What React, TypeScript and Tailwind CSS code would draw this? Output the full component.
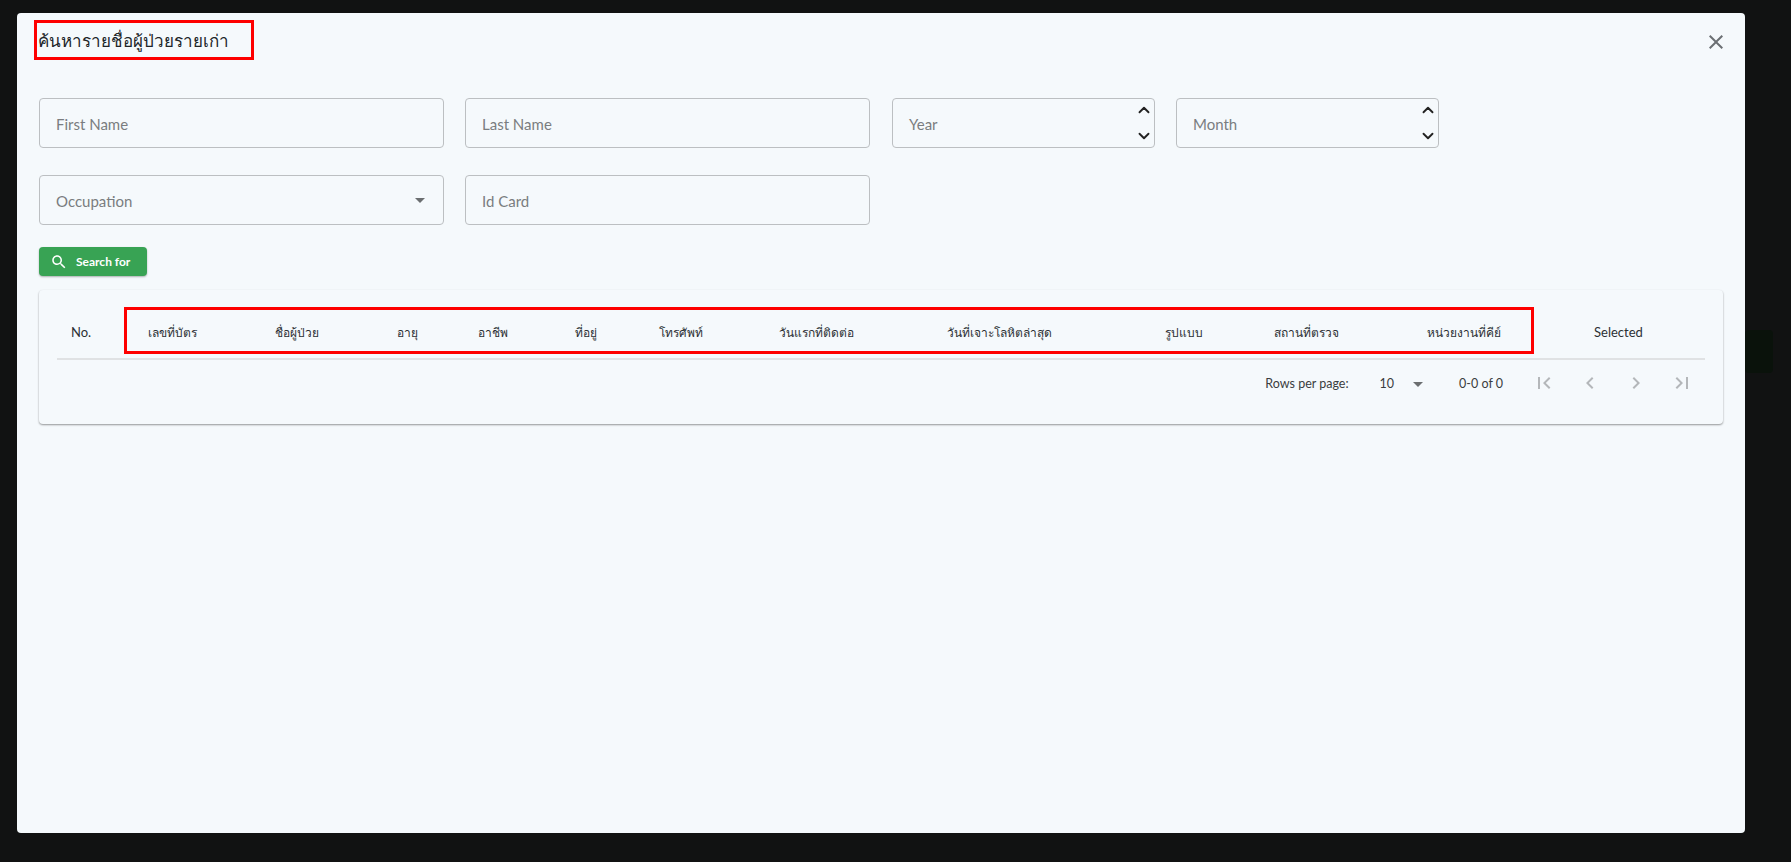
import { ChevronDown, ChevronUp } from "lucide-react";

const columns = [
  { label: "No.", width: "w-[67px]", pad: "pl-[14px] text-[13px]" },
  { label: "เลขที่บัตร", width: "w-[127px]", pad: "pl-[24px]" },
  { label: "ชื่อผู้ป่วย", width: "w-[122px]", pad: "pl-[24px]" },
  { label: "อายุ", width: "w-[81px]", pad: "pl-[24px]" },
  { label: "อาชีพ", width: "w-[97px]", pad: "pl-[24px]" },
  { label: "ที่อยู่", width: "w-[84px]", pad: "pl-[24px]" },
  { label: "โทรศัพท์", width: "w-[120px]", pad: "pl-[24px]" },
  { label: "วันแรกที่ติดต่อ", width: "w-[168px]", pad: "pl-[24px]" },
  { label: "วันที่เจาะโลหิตล่าสุด", width: "w-[218px]", pad: "pl-[24px]" },
  { label: "รูปแบบ", width: "w-[109px]", pad: "pl-[24px]" },
  { label: "สถานที่ตรวจ", width: "w-[153px]", pad: "pl-[24px]" },
  { label: "หน่วยงานที่คีย์", width: "w-[167px]", pad: "pl-[24px]" },
  { label: "Selected", width: "w-[135px]", pad: "pl-[24px] text-[13px]" },
];

// material icon paths, the reference uses these
const pagerIcons = [
  "M18.41 16.59L13.82 12l4.59-4.59L17 6l-6 6 6 6zM6 6h2v12H6z",
  "M15.41 16.59L10.83 12l4.58-4.59L14 6l-6 6 6 6 1.41-1.41z",
  "M8.59 16.59L13.17 12 8.59 7.41 10 6l6 6-6 6-1.41-1.41z",
  "M5.59 7.41L10.18 12l-4.59 4.59L7 18l6-6-6-6zM16 6h2v12h-2z",
];

function MuiIcon({ d, size, className }: { d: string; size: number; className?: string }) {
  return (
    <svg width={size} height={size} viewBox="0 0 24 24" fill="currentColor" className={className}>
      <path d={d} />
    </svg>
  );
}

function TextField({ label, className }: { label: string; className: string }) {
  return (
    <div className={`h-[50px] flex items-center rounded border border-[#bcbfc2] pl-4 pt-[2px] text-[15px] text-[#7a7d80] ${className}`}>
      {label}
    </div>
  );
}

function NumberField({ label }: { label: string }) {
  return (
    <div className="w-[263px] h-[50px] flex items-center justify-between rounded border border-[#bcbfc2] pl-4 pr-[1px] text-[15px] text-[#7a7d80]">
      <span className="pt-[2px]">{label}</span>
      <div className="flex flex-col justify-between h-[44px] text-[#222]">
        <ChevronUp size={18} strokeWidth={2.5} />
        <ChevronDown size={18} strokeWidth={2.5} />
      </div>
    </div>
  );
}

export default function App() {
  return (
    <div className="relative w-[1791px] h-[862px] overflow-hidden bg-[#111212] pt-[13px] pl-[17px] font-['Lato','Noto_Sans',sans-serif]">
      {/* button of the page behind the backdrop */}
      <div className="absolute left-[1745px] top-[330px] w-[28px] h-[43px] rounded-sm bg-[#0a120b]" />

      <div className="relative w-[1728px] h-[820px] rounded bg-[#f5f9fc] px-[22px]">
        {/* annotation boxes */}
        <div className="absolute left-[17px] top-[7px] w-[220px] h-[40px] border-[3px] border-[#fe0000]" />
        <div className="absolute left-[107px] top-[294px] w-[1410px] h-[47px] border-[3px] border-[#fe0000]" />

        <div className="h-[85px] flex items-start justify-between">
          <h2 className="mt-[13px] -ml-[1px] text-[17px] leading-[30px] text-[#212529]">ค้นหารายชื่อผู้ป่วยรายเก่า</h2>
          <MuiIcon
            size={24}
            d="M19 6.41L17.59 5 12 10.59 6.41 5 5 6.41 10.59 12 5 17.59 6.41 19 12 13.41 17.59 19 19 17.59 13.41 12z"
            className="mt-[17px] -mr-[5px] text-[#6b6f73]"
          />
        </div>

        <div className="flex gap-[21px]">
          <TextField label="First Name" className="w-[405px]" />
          <TextField label="Last Name" className="w-[405px] mr-[1px]" />
          <NumberField label="Year" />
          <NumberField label="Month" />
        </div>

        <div className="flex gap-[21px] mt-[27px]">
          <div className="w-[405px] h-[50px] flex items-center justify-between rounded border border-[#bcbfc2] pl-4 pr-[18px] text-[15px] text-[#7a7d80]">
            <span className="pt-[2px]">Occupation</span>
            <div className="w-0 h-0 border-x-[5px] border-x-transparent border-t-[5px] border-t-[#6b6e70]" />
          </div>
          <TextField label="Id Card" className="w-[405px]" />
        </div>

        <button className="mt-[22px] w-[108px] h-[29px] flex items-center gap-[8px] pl-[11px] rounded bg-[#38a354] text-white text-[12px] font-bold shadow-[0_1px_2px_rgba(0,0,0,0.3)]">
          <MuiIcon
            size={18}
            d="M15.5 14h-.79l-.28-.27C15.41 12.59 16 11.11 16 9.5 16 5.91 13.09 3 9.5 3S3 5.91 3 9.5 5.91 16 9.5 16c1.61 0 3.09-.59 4.23-1.57l.27.28v.79l5 4.99L20.49 19l-4.99-5zm-6 0C7.01 14 5 11.99 5 9.5S7.01 5 9.5 5 14 7.01 14 9.5 11.99 14 9.5 14z"
          />
          <span className="pt-[1px]">Search for</span>
        </button>

        <div className="mt-[14px] w-[1684px] h-[134px] rounded bg-[#f5f9fc] px-[18px] shadow-[0_1px_2px_rgba(0,0,0,0.4)]">
          <div className="flex h-[70px] items-center border-b-2 border-[#e0e2e4] text-[12px] text-[#2c3034] pt-[17px]">
            {columns.map((col) => (
              <div key={col.label} className={`${col.width} ${col.pad} shrink-0`}>
                {col.label}
              </div>
            ))}
          </div>
          <div className="flex items-center justify-end h-[49px] pr-[11px] text-[12.5px] text-[#3a3d40]">
            <span>Rows per page:</span>
            <span className="ml-[31px]">10</span>
            <div className="ml-[19px] w-0 h-0 border-x-[5px] border-x-transparent border-t-[5px] border-t-[#6b6e70]" />
            <span className="ml-[36px]">0-0 of 0</span>
            <div className="ml-[29px] -mt-[3px] flex gap-[22px] text-[#b4b7ba]">
              {pagerIcons.map((d) => (
                <MuiIcon key={d} d={d} size={24} />
              ))}
            </div>
          </div>
        </div>
      </div>
    </div>
  );
}
